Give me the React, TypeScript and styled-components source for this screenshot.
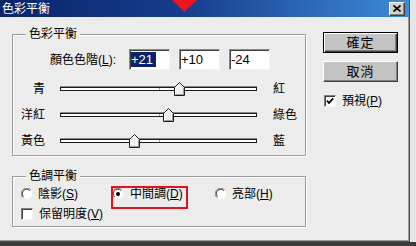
import React from "react";
import styled, { createGlobalStyle } from "styled-components";

const FONT = `"Liberation Sans", "Noto Sans CJK TC", sans-serif`;

const GlobalStyle = createGlobalStyle`
  html, body { margin: 0; padding: 0; background: #e8e8e8; }
  body { font-family: ${FONT}; font-size: 12px; color: #000; }
  #root { width: 416px; height: 246px; overflow: hidden; }
  * { box-sizing: border-box; }
`;

const Screen = styled.div`
  position: relative;
  width: 416px;
  height: 246px;
  display: flex;
  flex-direction: column;
`;

const TopArea = styled.div`
  display: flex;
  height: 242px;
`;

const Window = styled.div`
  width: 410px;
  display: flex;
  flex-direction: column;
  background: #ececec;
  border-right: 1px solid #505050;
  border-bottom: 1px solid #505050;
  box-shadow: inset -1px -1px #9a9a9a;
`;

const RightStrip = styled.div`
  flex: 1;
  background: #e6e6e6;
`;

const BottomStrip = styled.div`
  flex: 1;
  background: #3a3a3a;
`;

const TitleBar = styled.div`
  height: 17px;
  flex: none;
  display: flex;
  align-items: center;
  justify-content: space-between;
  padding: 0 4px 0 2px;
  background: linear-gradient(90deg, #0a246a 0%, #163d8c 45%, #3d8bd6 100%);
`;

const Title = styled.span`
  color: #fff;
  font-size: 12px;
  line-height: 14px;
`;

const CloseButton = styled.div`
  width: 16px;
  height: 14px;
  display: flex;
  align-items: center;
  justify-content: center;
  background: #d4d0c8;
  border: 1px solid;
  border-color: #fff #404040 #404040 #fff;
  box-shadow: inset -1px -1px #808080;
`;

const Body = styled.div`
  display: flex;
  padding: 15px 0 0 12px;
`;

const LeftCol = styled.div`
  width: 294px;
  padding-top: 2px;
  display: flex;
  flex-direction: column;
  gap: 20px;
`;

const GroupBox = styled.div<{ $h: number; $pt: number }>`
  position: relative;
  height: ${(p) => p.$h}px;
  padding-top: ${(p) => p.$pt}px;
  border: 1px solid #9c9c9c;
  box-shadow: inset 1px 1px #fff, 1px 1px #fff;
`;

const Legend = styled.span`
  position: absolute;
  top: -8px;
  left: 13px;
  padding: 0 3px;
  background: #ececec;
  font-size: 12px;
  line-height: 14px;
`;

const LevelRow = styled.div`
  display: flex;
  align-items: center;
  height: 21px;
`;

const LevelLabel = styled.span`
  width: 116px;
  padding-right: 13px;
  text-align: right;
  line-height: 14px;
`;

const Fields = styled.div`
  display: flex;
  gap: 9px;
`;

const NumberField = styled.div`
  width: 41px;
  height: 21px;
  display: flex;
  align-items: center;
  padding-left: 1px;
  background: #fff;
  border: 1px solid;
  border-color: #8a8a8a #f4f4f4 #f4f4f4 #8a8a8a;
  box-shadow: inset 1px 1px #404040;
  font-size: 13px;
  line-height: 15px;
`;

const Selected = styled.span`
  background: #0a246a;
  color: #fff;
  padding-right: 3px;
`;

const SliderGrid = styled.div`
  margin-top: 6px;
  display: grid;
  grid-template-columns: 32px 197px auto;
  column-gap: 15px;
  grid-auto-rows: 26px;
  align-items: center;
`;

const SideLabel = styled.span<{ $align: "left" | "right" }>`
  text-align: ${(p) => p.$align};
  padding-left: ${(p) => (p.$align === "left" ? 1 : 0)}px;
  line-height: 14px;
`;

const Track = styled.div`
  position: relative;
  height: 26px;
  display: flex;
  align-items: center;
`;

const Bar = styled.div`
  position: relative;
  width: 100%;
  height: 4px;
  background: #fff;
  border: 1px solid #1a1a1a;
  box-shadow: 0 -1px #8a8a8a;
  &::after {
    content: "";
    position: absolute;
    left: 98px;
    top: 0;
    width: 1px;
    height: 2px;
    background: #a8a8a8;
  }
`;

const Thumb = styled.svg`
  position: absolute;
  top: 6px;
  width: 11px;
  height: 14px;
`;

const RightCol = styled.div`
  margin-left: 17px;
  display: flex;
  flex-direction: column;
  gap: 8px;
`;

const Button = styled.div<{ $default?: boolean }>`
  width: 75px;
  height: 21px;
  display: flex;
  align-items: center;
  justify-content: center;
  background: #c3c3c3;
  font-size: 13px;
  letter-spacing: 1px;
  line-height: 15px;
  border: 1px solid;
  border-color: ${(p) => (p.$default ? "#000" : "#fff #404040 #404040 #fff")};
  box-shadow: ${(p) =>
    p.$default
      ? "inset 1px 1px #fff, inset -1px -1px #404040, inset -2px -2px #808080"
      : "inset -1px -1px #808080"};
`;

const CheckRow = styled.div<{ $mt: number; $pl: number }>`
  margin-top: ${(p) => p.$mt}px;
  padding-left: ${(p) => p.$pl}px;
  height: 14px;
  display: flex;
  align-items: center;
  gap: 6px;
  line-height: 14px;
`;

const Box = styled.div`
  width: 12px;
  height: 12px;
  flex: none;
  display: flex;
  align-items: center;
  justify-content: center;
  background: #fff;
  border: 1px solid;
  border-color: #808080 #f4f4f4 #f4f4f4 #808080;
  box-shadow: inset 1px 1px #404040;
`;

const GroupInner = styled.div`
  display: flex;
  flex-direction: column;
  gap: 6px;
`;

const RadioRow = styled.div`
  display: grid;
  grid-template-columns: 91px 103px auto;
  padding-left: 8px;
  height: 14px;
`;

const Option = styled.div<{ $highlight?: boolean }>`
  position: relative;
  display: flex;
  align-items: center;
  gap: ${(p) => (p.$highlight ? 6 : 5)}px;
  height: 14px;
  line-height: 14px;
  &::after {
    content: "";
    display: ${(p) => (p.$highlight ? "block" : "none")};
    position: absolute;
    left: -1px;
    top: -1px;
    width: 73px;
    height: 19px;
    border: 2px solid #e3121c;
  }
`;

const Arrow = styled.svg`
  position: absolute;
  left: 172px;
  top: 0;
`;

const Acc: React.FC<{ k: string }> = ({ k }) => (
  <>
    (<u>{k}</u>)
  </>
);

const Radio: React.FC<{ on?: boolean }> = ({ on }) => (
  <svg width="12" height="12" viewBox="0 0 12 12">
    <circle cx="6" cy="6" r="5" fill="#fff" />
    <path d="M1.8 9.6 A5 5 0 0 1 9.6 1.8" stroke="#808080" strokeWidth="1" fill="none" />
    <path d="M2.6 8.8 A4 4 0 0 1 8.8 2.6" stroke="#404040" strokeWidth="1" fill="none" />
    <path d="M10.2 2.4 A5 5 0 0 1 2.4 10.2" stroke="#f0f0f0" strokeWidth="1" fill="none" />
    {on && <circle cx="6" cy="6" r="2" fill="#000" />}
  </svg>
);

const sliders = [
  { left: "青", right: "紅", value: 21 },
  { left: "洋紅", right: "綠色", value: 10 },
  { left: "黃色", right: "藍", value: -24 },
];

export default function App() {
  return (
    <>
      <GlobalStyle />
      <Screen>
        <TopArea>
          <Window>
            <TitleBar>
              <Title>色彩平衡</Title>
              <CloseButton>
                <svg width="8" height="7" viewBox="0 0 8 7">
                  <path d="M0.5 0.5 L7.5 6.5 M7.5 0.5 L0.5 6.5" stroke="#000" strokeWidth="1.6" />
                </svg>
              </CloseButton>
            </TitleBar>
            <Body>
              <LeftCol>
                <GroupBox $h={122} $pt={14}>
                  <Legend>色彩平衡</Legend>
                  <LevelRow>
                    <LevelLabel>
                      顏色色階<Acc k="L" />:
                    </LevelLabel>
                    <Fields>
                      <NumberField>
                        <Selected>+21</Selected>
                      </NumberField>
                      <NumberField>+10</NumberField>
                      <NumberField>-24</NumberField>
                    </Fields>
                  </LevelRow>
                  <SliderGrid>
                    {sliders.map((s) => (
                      <React.Fragment key={s.left}>
                        <SideLabel $align="right">{s.left}</SideLabel>
                        <Track>
                          <Bar />
                          <Thumb
                            viewBox="0 0 11 14"
                            style={{ left: `${98.5 + s.value * 0.985 - 5.5}px` }}
                          >
                            <polygon
                              points="0.5,5.5 5.5,0.5 10.5,5.5 10.5,13.5 0.5,13.5"
                              fill="#f0f0f0"
                              stroke="#1a1a1a"
                            />
                            <polyline
                              points="1.5,12.5 1.5,5.9 5.5,1.9"
                              fill="none"
                              stroke="#ffffff"
                            />
                            <polyline
                              points="9.5,6 9.5,12.5 1.5,12.5"
                              fill="none"
                              stroke="#9a9a9a"
                            />
                          </Thumb>
                        </Track>
                        <SideLabel $align="left">{s.right}</SideLabel>
                      </React.Fragment>
                    ))}
                  </SliderGrid>
                </GroupBox>
                <GroupBox $h={51} $pt={10}>
                  <Legend>色調平衡</Legend>
                  <GroupInner>
                    <RadioRow>
                      <Option>
                        <Radio />
                        <span>
                          陰影<Acc k="S" />
                        </span>
                      </Option>
                      <Option $highlight>
                        <Radio on />
                        <span>
                          中間調<Acc k="D" />
                        </span>
                      </Option>
                      <Option>
                        <Radio />
                        <span>
                          亮部<Acc k="H" />
                        </span>
                      </Option>
                    </RadioRow>
                    <CheckRow $mt={0} $pl={8}>
                      <Box />
                      <span>
                        保留明度<Acc k="V" />
                      </span>
                    </CheckRow>
                  </GroupInner>
                </GroupBox>
              </LeftCol>
              <RightCol>
                <Button $default>確定</Button>
                <Button>取消</Button>
                <CheckRow $mt={4} $pl={1}>
                  <Box>
                    <svg width="8" height="8" viewBox="0 0 8 8">
                      <path d="M0.8 3.6 L3 5.9 L7.2 1.4" stroke="#000" strokeWidth="1.7" fill="none" />
                    </svg>
                  </Box>
                  <span>
                    預視<Acc k="P" />
                  </span>
                </CheckRow>
              </RightCol>
            </Body>
          </Window>
          <RightStrip />
        </TopArea>
        <BottomStrip />
        <Arrow width="25" height="12" viewBox="0 0 25 12">
          <polygon points="0,0 25,0 12.5,12" fill="#f0141e" />
        </Arrow>
      </Screen>
    </>
  );
}
